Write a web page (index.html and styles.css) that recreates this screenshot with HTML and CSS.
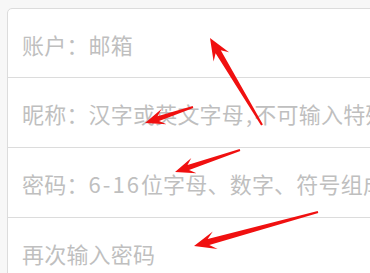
FILE: index.html
```html
<!DOCTYPE html>
<html lang="zh">
<head>
<meta charset="utf-8">
<link rel="stylesheet" href="styles.css">
</head>
<body>
<div class="page">
  <div class="card">
    <div class="row"><span class="ph">账户：邮箱</span></div>
    <div class="row"><span class="ph">昵称：汉字或英文字母<span class="comma">,</span>不可输入特殊字符</span></div>
    <div class="row"><span class="ph">密码：<span class="num">6-16</span>位字母、数字、符号组成</span></div>
    <div class="row"><span class="ph">再次输入密码</span></div>
  </div>
  <svg class="arrows" width="370" height="273" viewBox="0 0 370 273">
    <polygon fill="#f01010" points="262.9,124.5 220.8,50.2 229.0,52.3 210,38 213.6,61.5 215.6,53.2 261.1,125.5"/>
    <polygon fill="#f01010" points="192.7,106.1 157.5,116.2 161.5,109.1 145,123 166.5,124.3 159.1,121.0 193.3,108.0"/>
    <polygon fill="#f01010" points="239.7,149.1 187.5,165.1 191.3,158.0 175,172 196.5,173.2 189.1,169.9 240.3,150.9"/>
    <polygon fill="#f01010" points="317.7,211.0 207.7,239.1 212.8,231.5 194,246 217.6,248.9 209.3,244.9 318.3,213.0"/>
  </svg>
</div>
</body>
</html>
```
FILE: styles.css
```css
html, body {
  margin: 0;
  padding: 0;
  background: #f7f7f7;
  overflow: hidden;
}
.page {
  position: relative;
  width: 370px;
  height: 273px;
  overflow: hidden;
  padding-top: 8px;
  box-sizing: border-box;
}
.card {
  margin-left: 7px;
  width: 380px;
  background: #ffffff;
  border: 1px solid #dcdcdc;
  border-radius: 5px;
}
.row {
  height: 70px;
  box-sizing: border-box;
  border-bottom: 1px solid #dcdcdc;
  display: flex;
  align-items: center;
  padding-left: 14px;
  padding-top: 1px;
  white-space: nowrap;
  overflow: hidden;
}
.row:first-child { height: 69px; }
.ph {
  font-family: "Noto Sans CJK SC", "Noto Sans", sans-serif;
  font-size: 22px;
  line-height: 30px;
  color: #bfbfbf;
  letter-spacing: 0.2px;
}
.num {
  letter-spacing: 2px;
}
.comma {
  margin: 0 2px;
}
.arrows {
  position: absolute;
  left: 0;
  top: 0;
}
```
